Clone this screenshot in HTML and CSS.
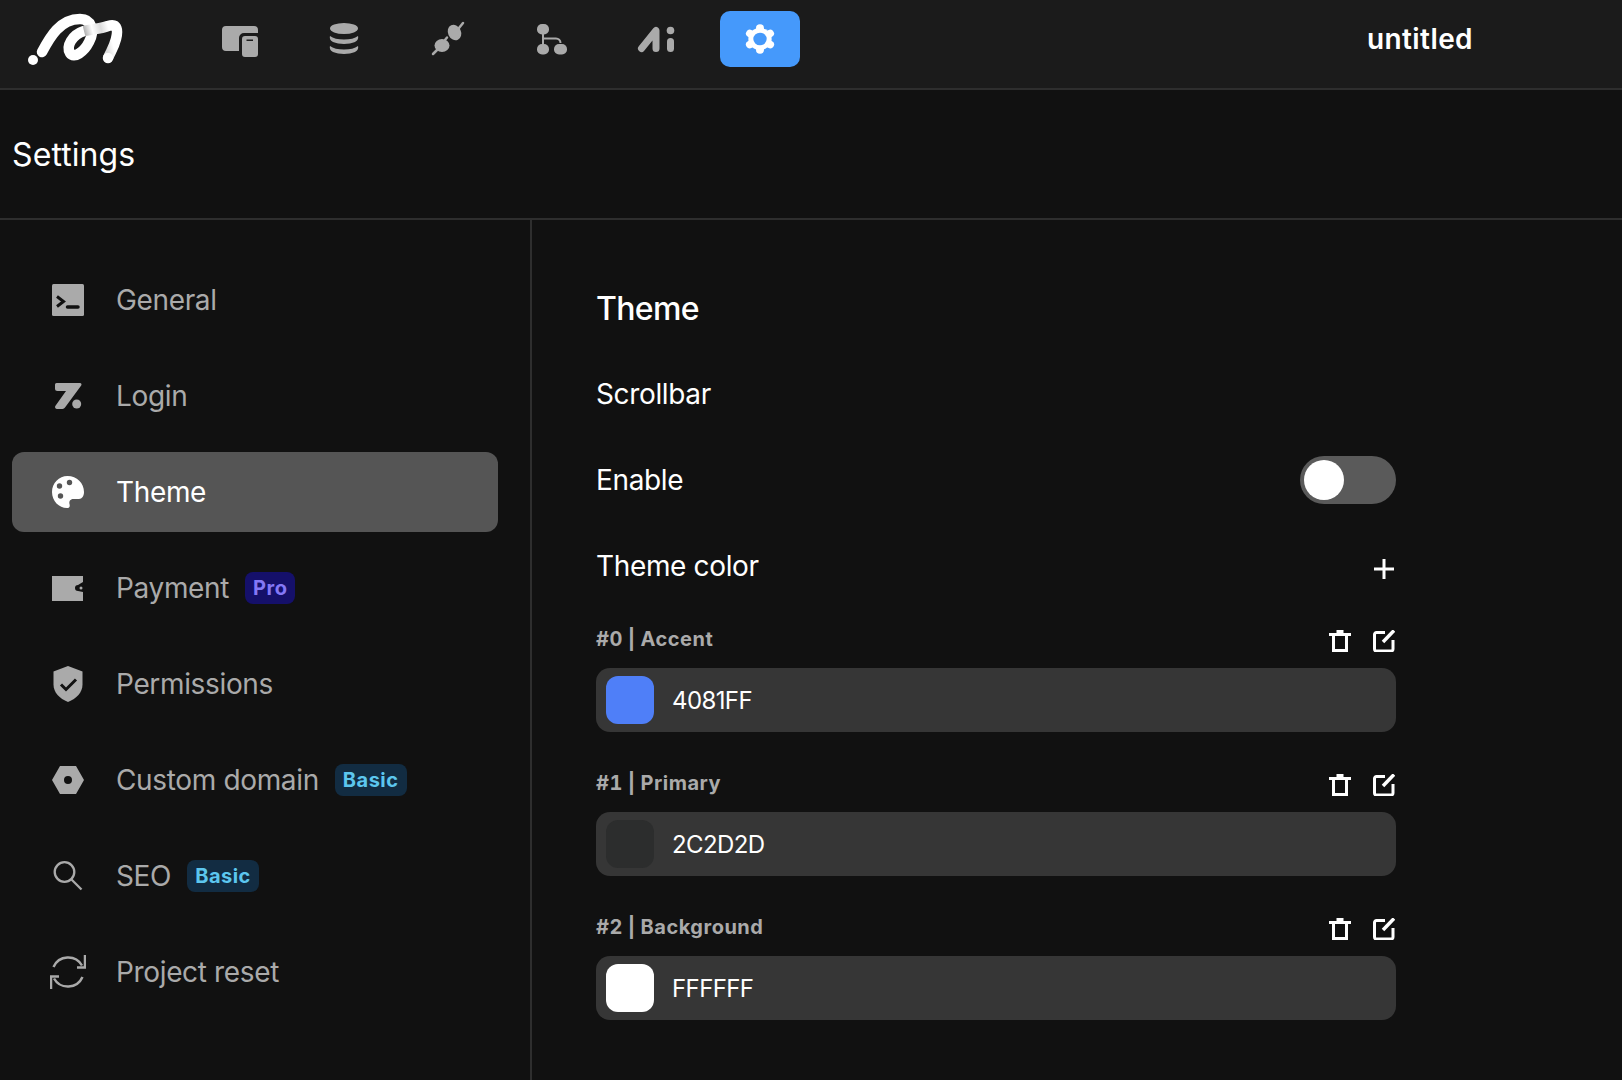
FILE: index.html
```html
<!DOCTYPE html>
<html lang="en">
<head>
    <meta charset="UTF-8">
    <title>Settings</title>
    <link rel="stylesheet" href="styles.css">
</head>
<body>
    <!-- Top bar -->
    <header class="topbar">
        <svg class="logo" viewBox="27 12 96 52" fill="none" stroke-linejoin="round">
            <defs>
                <linearGradient id="logoShade" gradientUnits="userSpaceOnUse" x1="82" y1="32" x2="108" y2="25">
                    <stop offset="0" stop-color="#999999"/>
                    <stop offset="0.4" stop-color="#ffffff"/>
                    <stop offset="0.72" stop-color="#dcdcdc"/>
                    <stop offset="1" stop-color="#ffffff"/>
                </linearGradient>
            </defs>
            <circle cx="33" cy="59" r="5" fill="#fff"/>
            <path d="M42 51 C50 36 60 18 80 18 C92 18 95 30 89 41 C84 51 74 58 70 52 C66 45 72 34 84 30" stroke="#fff" stroke-width="10.500" stroke-linecap="round"/>
            <path d="M84 30 C92 28 100 28 108 25 C118 22 118 30 116 38 C114 46 111 50 108 57" stroke="url(#logoShade)" stroke-width="10.500"/>
            <circle cx="108" cy="57" r="5.250" fill="#fff"/>
        </svg>
        <nav class="nav">
            <a class="nav-btn">
                <svg class="nav-icon" viewBox="0 0 36 32"><path d="M4 3h28a4 4 0 0 1 4 4v3H22a5 5 0 0 0-5 5v13H4a4 4 0 0 1-4-4V7a4 4 0 0 1 4-4z" fill="#aaa"/><path fill-rule="evenodd" d="M23 13h10a3 3 0 0 1 3 3v15a3 3 0 0 1-3 3H23a3 3 0 0 1-3-3V16a3 3 0 0 1 3-3zm1.500 3.500V18H31v-1.500z" fill="#aaa"/></svg>
            </a>
            <a class="nav-btn">
                <svg class="nav-icon" viewBox="0 0 36 32" fill="#aaa"><ellipse cx="18" cy="5.500" rx="14" ry="5.500"/><path d="M4 13c3 2.500 8 3.500 14 3.500S29 15.500 32 13c.8 3-1 5-3 6-6 2.500-16 2.500-22 0-2-1-3.800-3-3-6z"/><path d="M4 23c3 2.500 8 3.500 14 3.500S29 25.500 32 23c.8 3-1 5-3 6-6 2.500-16 2.500-22 0-2-1-3.800-3-3-6z"/></svg>
            </a>
            <a class="nav-btn">
                <svg class="nav-icon" viewBox="0 0 36 32" fill="#aaa" stroke="#aaa" stroke-linecap="round"><ellipse cx="24.500" cy="9.500" rx="6.500" ry="8" stroke="none" transform="rotate(-25 24.500 9.500)"/><path d="M29 5l4-5" stroke-width="2.500"/><ellipse cx="12" cy="22.500" rx="7.500" ry="6.500" stroke="none"/><path d="M7 27l-4 4M15 17l2-2.500" stroke-width="2.500"/></svg>
            </a>
            <a class="nav-btn">
                <svg class="nav-icon" viewBox="0 0 36 32" fill="#aaa"><rect x="3" y="1" width="12" height="10.500" rx="5"/><rect x="3" y="21" width="12" height="10.500" rx="5"/><rect x="20" y="21" width="13" height="10.500" rx="5"/><path d="M9 10v12M9 15.500h13a4.500 4.500 0 0 1 4.500 4.500" fill="none" stroke="#aaa" stroke-width="2"/></svg>
            </a>
            <a class="nav-btn">
                <svg class="nav-icon" viewBox="0 0 36 32" fill="none" stroke="#aaa" stroke-linecap="round" stroke-linejoin="round"><path d="M3.500 25.500L18 7.500V25.500" stroke-width="7"/><path d="M32.500 18.500V25.500" stroke-width="7"/><circle cx="32.500" cy="7.500" r="3.800" fill="#aaa" stroke="none"/></svg>
            </a>
            <a class="nav-btn active">
                <svg class="nav-icon" viewBox="0 0 36 32"><g transform="translate(18 16) scale(1.06 1)" stroke="#fff" stroke-width="7.500" stroke-linecap="round"><path d="M0-11V11"/><path d="M0-11V11" transform="rotate(60)"/><path d="M0-11V11" transform="rotate(120)"/><circle r="11" fill="#fff" stroke="none"/><circle r="6.300" fill="#4599fb" stroke="none"/></g></svg>
            </a>
        </nav>
        <div class="doc-name">untitled</div>
    </header>

    <h1 class="page-title">Settings</h1>

    <div class="layout">
        <!-- Sidebar menu -->
        <aside class="sidebar">
            <a class="menu-item">
                <svg class="menu-icon" viewBox="0 0 32 32"><rect width="32" height="32" rx="1.500" fill="#aaa"/><path d="M5 12.500l6.500 5-6.500 5" fill="none" stroke="#111" stroke-width="3"/><path d="M15.500 23h10.500" stroke="#111" stroke-width="3.500" stroke-linecap="round"/></svg>
                <span>General</span>
            </a>
            <a class="menu-item">
                <svg class="menu-icon" viewBox="0 0 32 32" fill="#aaa"><path d="M4.500 3H28a1.500 1.500 0 0 1 1.200 2.400L13 27.500a3 3 0 0 1-2.500 1.500H5a2 2 0 0 1-1.700-3L14 11H5.500A2.500 2.500 0 0 1 3 8.500v-4A1.500 1.500 0 0 1 4.500 3z"/><circle cx="24.700" cy="24" r="4.500"/></svg>
                <span>Login</span>
            </a>
            <a class="menu-item selected">
                <svg class="menu-icon" viewBox="0 0 32 32"><path fill="#fff" d="M15.500 0C7 0 0 7 0 16s7 16 15 16c3 0 3-2 2.500-4-.6-2.500.5-5 4-5H27c3 0 5-3 5-7C32 7 25 0 15.500 0z"/><circle cx="7.500" cy="10" r="2.700" fill="#555"/><circle cx="17.500" cy="6.500" r="2.700" fill="#555"/><circle cx="8.500" cy="20" r="2.700" fill="#555"/></svg>
                <span>Theme</span>
            </a>
            <a class="menu-item">
                <svg class="menu-icon" viewBox="0 0 32 32" fill="#aaa"><path d="M0 4h31v6l-5 3a3 3 0 0 0 0 6l5 1v9H0z"/><circle cx="29" cy="16" r="1.500"/></svg>
                <span>Payment</span>
                <em class="badge pro">Pro</em>
            </a>
            <a class="menu-item">
                <svg class="menu-icon tall" viewBox="0 0 32 36"><path fill="#aaa" d="M16 0l14.500 5.500v13c0 8-6 14-14.500 17.500C7.500 32.500 1.500 26.500 1.500 18.500v-13z"/><path d="M9 18.500l5 5L24 13.500" fill="none" stroke="#111" stroke-width="3"/></svg>
                <span>Permissions</span>
            </a>
            <a class="menu-item">
                <svg class="menu-icon" viewBox="0 0 32 32"><path fill="#aaa" fill-rule="evenodd" d="M8 2h16l8 14-8 14H8L0 16zm8 10a4 4 0 1 0 0 8 4 4 0 0 0 0-8z"/></svg>
                <span>Custom domain</span>
                <em class="badge basic">Basic</em>
            </a>
            <a class="menu-item">
                <svg class="menu-icon" viewBox="0 0 32 32" fill="none" stroke="#aaa" stroke-width="2.300"><circle cx="12.500" cy="12" r="9.800"/><path d="M19.500 19.500L29.500 29.500"/></svg>
                <span>SEO</span>
                <em class="badge basic">Basic</em>
            </a>
            <a class="menu-item">
                <svg class="menu-icon wide" viewBox="0 0 36 36" fill="none" stroke="#aaa" stroke-width="2.500"><path d="M3.500 13A16 16 0 0 1 32 11.500"/><path d="M32.500 23A16 16 0 0 1 4 24.500"/><path d="M35 1V13.500H27"/><path d="M1 35V22.500H9"/></svg>
                <span>Project reset</span>
            </a>
        </aside>

        <!-- Theme settings -->
        <main class="content">
            <h2 class="section-title">Theme</h2>
            <div class="row">Scrollbar</div>
            <div class="row">
                <span>Enable</span>
                <span class="toggle"><span class="knob"></span></span>
            </div>
            <div class="row">
                <span>Theme color</span>
                <svg class="plus" viewBox="0 0 20 20"><path d="M10 0v20M0 10h20" stroke="#fff" stroke-width="3"/></svg>
            </div>

            <div class="color-block">
                <div class="color-head">
                    <label>#0 | Accent</label>
                    <span class="actions">
                        <svg class="act" viewBox="0 0 22 22" fill="none" stroke="#fff" stroke-width="3"><path d="M0 4.500h22M7.500 1.500h7M4.500 4.500v16h13v-16"/></svg>
                        <svg class="act" viewBox="0 0 22 22" fill="none" stroke="#fff" stroke-width="3"><path d="M12 2.500H3.500a2 2 0 0 0-2 2V19a2 2 0 0 0 2 2H18a2 2 0 0 0 2-2v-9"/><path d="M10 12L21 .5" stroke-width="3.500"/></svg>
                    </span>
                </div>
                <div class="color-input">
                    <span class="swatch accent"></span>
                    <span>4081FF</span>
                </div>
            </div>
            <div class="color-block">
                <div class="color-head">
                    <label>#1 | Primary</label>
                    <span class="actions">
                        <svg class="act" viewBox="0 0 22 22" fill="none" stroke="#fff" stroke-width="3"><path d="M0 4.500h22M7.500 1.500h7M4.500 4.500v16h13v-16"/></svg>
                        <svg class="act" viewBox="0 0 22 22" fill="none" stroke="#fff" stroke-width="3"><path d="M12 2.500H3.500a2 2 0 0 0-2 2V19a2 2 0 0 0 2 2H18a2 2 0 0 0 2-2v-9"/><path d="M10 12L21 .5" stroke-width="3.500"/></svg>
                    </span>
                </div>
                <div class="color-input">
                    <span class="swatch primary"></span>
                    <span>2C2D2D</span>
                </div>
            </div>
            <div class="color-block">
                <div class="color-head">
                    <label>#2 | Background</label>
                    <span class="actions">
                        <svg class="act" viewBox="0 0 22 22" fill="none" stroke="#fff" stroke-width="3"><path d="M0 4.500h22M7.500 1.500h7M4.500 4.500v16h13v-16"/></svg>
                        <svg class="act" viewBox="0 0 22 22" fill="none" stroke="#fff" stroke-width="3"><path d="M12 2.500H3.500a2 2 0 0 0-2 2V19a2 2 0 0 0 2 2H18a2 2 0 0 0 2-2v-9"/><path d="M10 12L21 .5" stroke-width="3.500"/></svg>
                    </span>
                </div>
                <div class="color-input">
                    <span class="swatch background"></span>
                    <span>FFFFFF</span>
                </div>
            </div>
        </main>
    </div>
</body>
</html>
```

FILE: styles.css
```css
* {
    box-sizing: border-box;
}

html, body {
    height: 100%;
}

body {
    margin: 0;
    background-color: #111;
    color: #fff;
    font-family: Inter, "Noto Sans", sans-serif;
    overflow: hidden;
}

.topbar {
    display: flex;
    align-items: center;
    height: 90px;
    padding-bottom: 10px;
    background-color: #1b1b1b;
    border-bottom: 2px solid #2e2e2e;
}

.logo {
    flex: none;
    width: 96px;
    height: 52px;
    margin-left: 27px;
    margin-right: 77px;
}

.nav {
    display: flex;
    gap: 24px;
}

.nav-btn {
    display: flex;
    align-items: center;
    justify-content: center;
    width: 80px;
    height: 56px;
    border-radius: 10px;
}

.nav-btn.active {
    background-color: #4599fb;
}

.nav-icon {
    width: 36px;
    height: 32px;
    overflow: visible;
}

.doc-name {
    margin-left: 567px;
    font-size: 28px;
    font-weight: 600;
    letter-spacing: 0.4px;
}

.page-title {
    display: flex;
    align-items: center;
    height: 130px;
    margin: 0;
    padding-left: 12px;
    border-bottom: 2px solid #2e2e2e;
    font-size: 32px;
    font-weight: 400;
    letter-spacing: 0.1px;
}

.layout {
    display: flex;
    height: 860px;
}

.sidebar {
    display: flex;
    flex-direction: column;
    gap: 16px;
    width: 532px;
    padding: 40px 32px 0 12px;
    border-right: 2px solid #2e2e2e;
}

.menu-item {
    display: flex;
    align-items: center;
    height: 80px;
    padding-left: 40px;
    border-radius: 12px;
    color: #aaa;
    font-size: 28px;
    letter-spacing: -0.35px;
}

.menu-item.selected {
    background-color: #555;
    color: #fff;
}

.menu-item span {
    margin-left: 32px;
}

.menu-icon {
    flex: none;
    width: 32px;
    height: 32px;
}

.menu-icon.tall {
    height: 36px;
}

.menu-icon.wide {
    width: 36px;
    height: 36px;
    margin: 0 -2px;
}

.badge {
    height: 32px;
    margin-left: 16px;
    padding: 0 8px;
    border-radius: 8px;
    font-size: 20px;
    font-style: normal;
    font-weight: 700;
    letter-spacing: 0.5px;
    line-height: 32px;
}

.badge.pro {
    background-color: #15106a;
    color: #8478f6;
}

.badge.basic {
    background-color: #122c42;
    color: #5cc6ee;
}

.content {
    width: 864px;
    padding: 0 0 0 64px;
}

.section-title {
    height: 131px;
    margin: 0;
    padding-top: 69px;
    font-size: 32px;
    font-weight: 500;
    letter-spacing: -0.65px;
    line-height: 40px;
}

.row {
    display: flex;
    align-items: center;
    justify-content: space-between;
    height: 86px;
    font-size: 28px;
    letter-spacing: -0.35px;
}

.toggle {
    display: block;
    width: 96px;
    height: 48px;
    padding: 4px;
    border-radius: 24px;
    background-color: #5a5a5a;
}

.knob {
    display: block;
    width: 40px;
    height: 40px;
    border-radius: 50%;
    background-color: #fff;
}

.plus {
    width: 20px;
    height: 20px;
    margin-right: 2px;
    margin-top: 6px;
}

.color-block {
    height: 144px;
}

.color-head {
    display: flex;
    align-items: center;
    justify-content: space-between;
    height: 59px;
}

.color-head label {
    color: #aaa;
    font-size: 20px;
    font-variant-numeric: tabular-nums;
    font-weight: 700;
    letter-spacing: 0.5px;
    word-spacing: -1px;
}

.actions {
    display: flex;
    gap: 22px;
    margin-top: 4px;
    margin-right: 1px;
}

.act {
    width: 22px;
    height: 22px;
}

.color-input {
    display: flex;
    align-items: center;
    gap: 18px;
    height: 64px;
    padding-left: 10px;
    border-radius: 14px;
    background-color: #363636;
    font-size: 24px;
    letter-spacing: -0.6px;
}

.swatch {
    width: 48px;
    height: 48px;
    border-radius: 12px;
}

.swatch.accent {
    background-color: #4f7ff8;
}

.swatch.primary {
    background-color: #2c2d2d;
}

.swatch.background {
    background-color: #fff;
}
```
